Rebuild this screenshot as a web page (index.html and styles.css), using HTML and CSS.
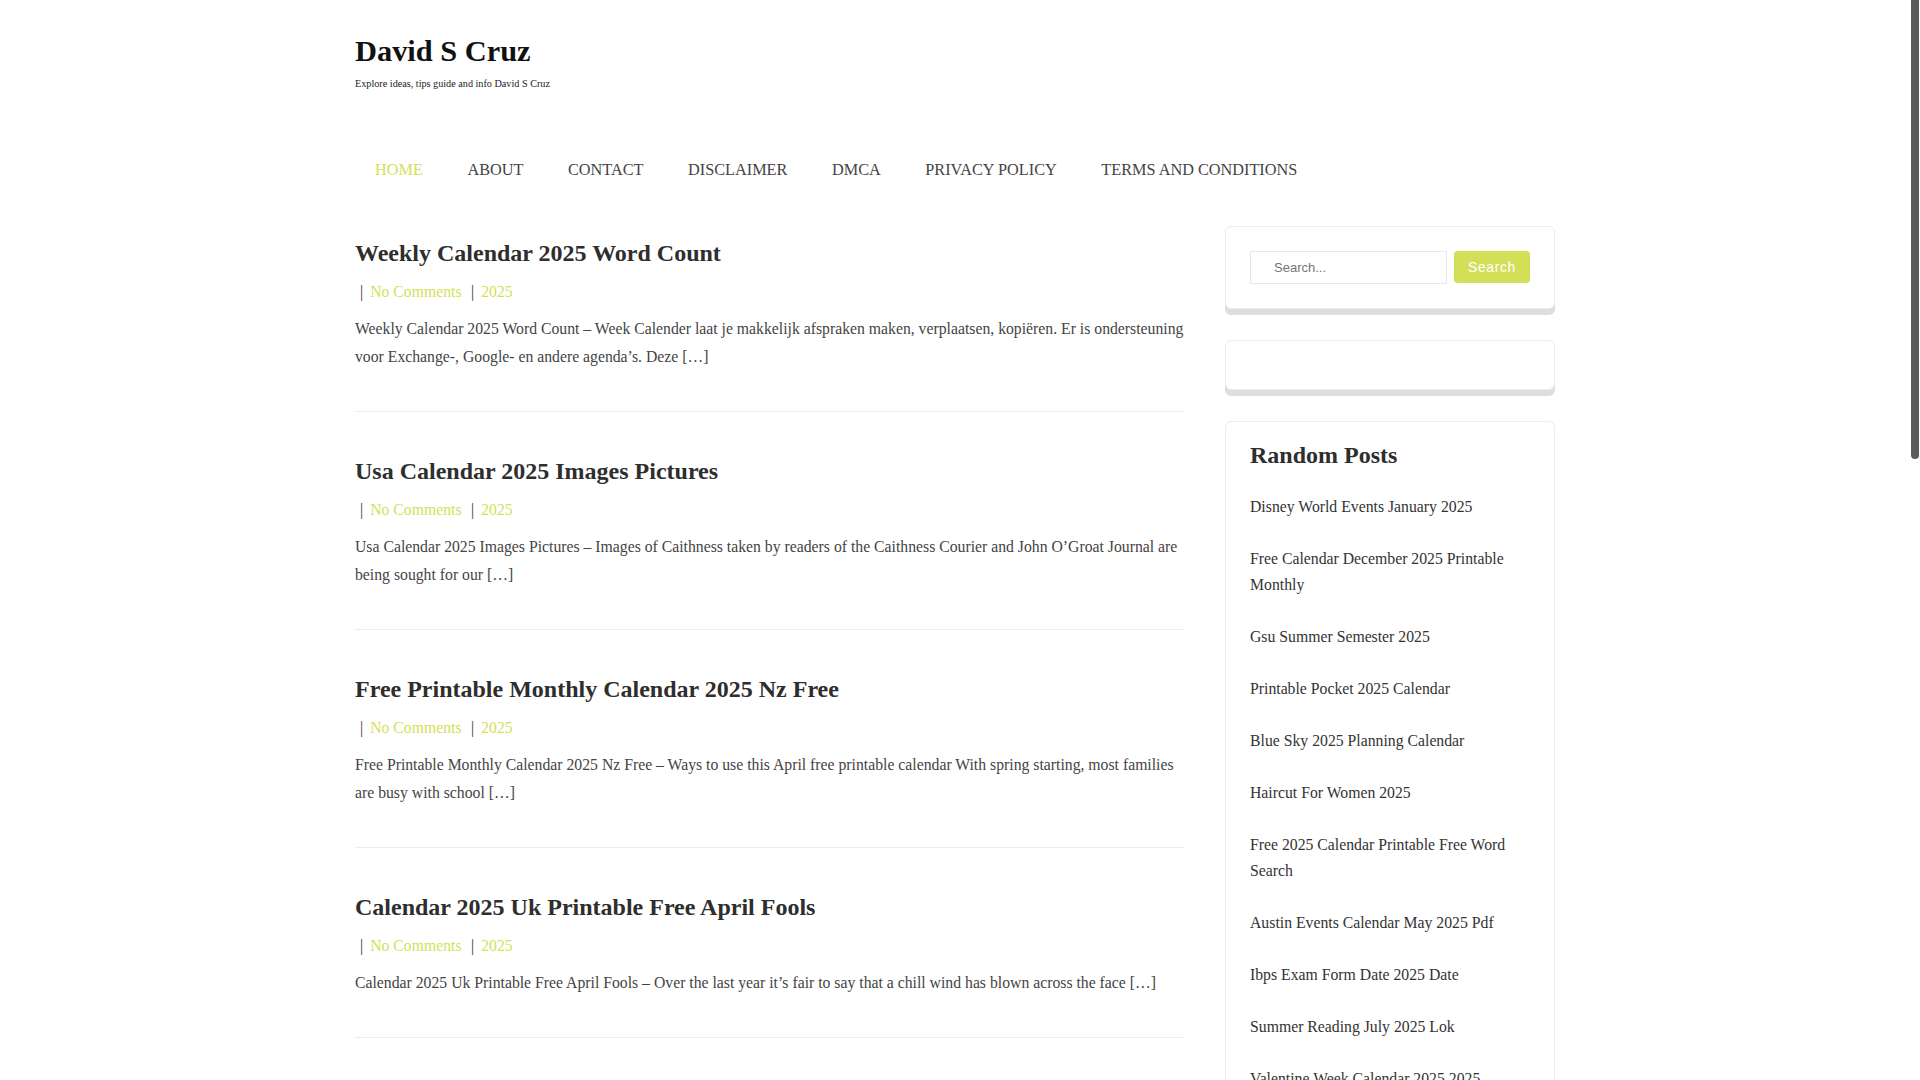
FILE: index.html
```html
<!DOCTYPE html>
<html lang="en">
<head>
<meta charset="utf-8">
<title>David S Cruz</title>
<link rel="stylesheet" href="styles.css">
</head>
<body>
<div class="container">
  <header class="site-header">
    <h1 class="site-title"><a href="#">David S Cruz</a></h1>
    <p class="site-desc">Explore ideas, tips guide and info David S Cruz</p>
  </header>
  <nav class="main-nav">
    <ul>
      <li><a class="active" href="#">HOME</a></li>
      <li><a href="#">ABOUT</a></li>
      <li><a href="#">CONTACT</a></li>
      <li><a href="#">DISCLAIMER</a></li>
      <li><a href="#">DMCA</a></li>
      <li><a href="#">PRIVACY POLICY</a></li>
      <li><a href="#">TERMS AND CONDITIONS</a></li>
    </ul>
  </nav>
  <div class="site-content">
    <main class="posts">
      <article class="post">
        <h2 class="post-title"><a href="#">Weekly Calendar 2025 Word Count</a></h2>
        <div class="meta"><span class="sep first">|</span><a href="#">No Comments</a><span class="sep">|</span><a href="#">2025</a></div>
        <p class="excerpt">Weekly Calendar 2025 Word Count – Week Calender laat je makkelijk afspraken maken, verplaatsen, kopiëren. Er is ondersteuning voor Exchange-, Google- en andere agenda’s. Deze […]</p>
      </article>
      <article class="post">
        <h2 class="post-title"><a href="#">Usa Calendar 2025 Images Pictures</a></h2>
        <div class="meta"><span class="sep first">|</span><a href="#">No Comments</a><span class="sep">|</span><a href="#">2025</a></div>
        <p class="excerpt">Usa Calendar 2025 Images Pictures – Images of Caithness taken by readers of the Caithness Courier and John O’Groat Journal are being sought for our […]</p>
      </article>
      <article class="post">
        <h2 class="post-title"><a href="#">Free Printable Monthly Calendar 2025 Nz Free</a></h2>
        <div class="meta"><span class="sep first">|</span><a href="#">No Comments</a><span class="sep">|</span><a href="#">2025</a></div>
        <p class="excerpt">Free Printable Monthly Calendar 2025 Nz Free – Ways to use this April free printable calendar With spring starting, most families are busy with school […]</p>
      </article>
      <article class="post">
        <h2 class="post-title"><a href="#">Calendar 2025 Uk Printable Free April Fools</a></h2>
        <div class="meta"><span class="sep first">|</span><a href="#">No Comments</a><span class="sep">|</span><a href="#">2025</a></div>
        <p class="excerpt">Calendar 2025 Uk Printable Free April Fools – Over the last year it’s fair to say that a chill wind has blown across the face […]</p>
      </article>
      <article class="post">
        <h2 class="post-title"><a href="#">Printable Calendar 2025 With Holidays Ireland</a></h2>
        <div class="meta"><span class="sep first">|</span><a href="#">No Comments</a><span class="sep">|</span><a href="#">2025</a></div>
        <p class="excerpt">Printable Calendar 2025 With Holidays Ireland – A printable calendar is a handy way to keep track of bank holidays, school breaks and family events throughout the year, and it can be […]</p>
      </article>
      <article class="post">
        <h2 class="post-title"><a href="#">Academic Calendar 2025 Ucla Spring Quarter</a></h2>
        <div class="meta"><span class="sep first">|</span><a href="#">No Comments</a><span class="sep">|</span><a href="#">2025</a></div>
        <p class="excerpt">Academic Calendar 2025 Ucla Spring Quarter – The academic calendar lists the important dates for instruction, final examinations, holidays and the start of the next […]</p>
      </article>
      <article class="post">
        <h2 class="post-title"><a href="#">Monthly Planner 2025 Printable Pdf</a></h2>
        <div class="meta"><span class="sep first">|</span><a href="#">No Comments</a><span class="sep">|</span><a href="#">2025</a></div>
        <p class="excerpt">Monthly Planner 2025 Printable Pdf – Planning your month ahead is one of the simplest ways to stay organised, and a printable planner makes it easy to write down […]</p>
      </article>
      <article class="post">
        <h2 class="post-title"><a href="#">Lunar Calendar 2025 March Full Moon</a></h2>
        <div class="meta"><span class="sep first">|</span><a href="#">No Comments</a><span class="sep">|</span><a href="#">2025</a></div>
        <p class="excerpt">Lunar Calendar 2025 March Full Moon – The moon phases change every few days, and a lunar calendar shows exactly when the new moon, first quarter and full moon will […]</p>
      </article>
      <article class="post">
        <h2 class="post-title"><a href="#">Yearly Calendar 2025 One Page Landscape</a></h2>
        <div class="meta"><span class="sep first">|</span><a href="#">No Comments</a><span class="sep">|</span><a href="#">2025</a></div>
        <p class="excerpt">Yearly Calendar 2025 One Page Landscape – A one page yearly calendar gives you an overview of all twelve months at a glance, perfect for your desk or […]</p>
      </article>
      <article class="post">
        <h2 class="post-title"><a href="#">School Holidays 2025 Calendar Nsw</a></h2>
        <div class="meta"><span class="sep first">|</span><a href="#">No Comments</a><span class="sep">|</span><a href="#">2025</a></div>
        <p class="excerpt">School Holidays 2025 Calendar Nsw – Families planning trips for the coming year will want to check the school term dates and public holidays before […]</p>
      </article>
      <div class="pagination"><span class="current">1</span><a href="#">2</a><a href="#">3</a><a href="#">Next »</a></div>
    </main>
    <aside class="sidebar">
      <section class="widget">
        <form class="search-form" onsubmit="return false">
          <input class="search-field" type="search" placeholder="Search...">
          <button class="search-btn" type="submit">Search</button>
        </form>
      </section>
      <section class="widget"></section>
      <section class="widget widget-posts">
        <h3 class="widget-title">Random Posts</h3>
        <ul>
          <li><a href="#">Disney World Events January 2025</a></li>
          <li><a href="#">Free Calendar December 2025 Printable Monthly</a></li>
          <li><a href="#">Gsu Summer Semester 2025</a></li>
          <li><a href="#">Printable Pocket 2025 Calendar</a></li>
          <li><a href="#">Blue Sky 2025 Planning Calendar</a></li>
          <li><a href="#">Haircut For Women 2025</a></li>
          <li><a href="#">Free 2025 Calendar Printable Free Word Search</a></li>
          <li><a href="#">Austin Events Calendar May 2025 Pdf</a></li>
          <li><a href="#">Ibps Exam Form Date 2025 Date</a></li>
          <li><a href="#">Summer Reading July 2025 Lok</a></li>
          <li><a href="#">Valentine Week Calendar 2025 2025</a></li>
          <li><a href="#">Easter Sunday 2025 Date Calendar</a></li>
        </ul>
      </section>
    </aside>
  </div>
  <footer class="site-footer">Copyright © 2025 David S Cruz</footer>
</div>
<div class="scroll-track" aria-hidden="true"><div class="scroll-thumb"></div></div>
</body>
</html>
```

FILE: styles.css
```css
html, body {
  margin: 0;
  padding: 0;
  background: #fff;
}
body {
  padding-right: 10px;
  font-family: "Liberation Serif", "Times New Roman", serif;
  font-size: 16px;
  color: #444;
}
a {
  text-decoration: none;
  color: inherit;
}
.scroll-track {
  position: fixed;
  top: 0;
  right: 0;
  width: 10px;
  height: 100vh;
  background: #fff;
}
.scroll-thumb {
  width: 8px;
  height: 459px;
  margin-left: 1px;
  border-radius: 0 0 4px 4px;
  background: #5c5c5c;
}
.container {
  width: 1200px;
  margin: 0 auto;
}
.site-header {
  padding-top: 33px;
}
.site-title {
  margin: 0;
  font-size: 30.4px;
  line-height: 36px;
  font-weight: bold;
  color: #111;
}
.site-desc {
  margin: 8px 0 0;
  font-size: 10.2px;
  line-height: 14px;
  color: #222;
}
.main-nav {
  margin-top: 54px;
}
.main-nav ul {
  display: flex;
  gap: 4.6px;
  list-style: none;
  margin: 0;
  padding: 0;
}
.main-nav a {
  display: block;
  padding: 0 20px;
  line-height: 50px;
  font-size: 16.25px;
  color: #444;
}
.main-nav a.active {
  color: #d3df57;
}
.site-content {
  display: flex;
  gap: 40px;
  align-items: flex-start;
}
.posts {
  width: 830px;
}
.post {
  padding: 44px 0 40px;
  border-bottom: 1px solid #ebebf0;
}
.post:first-child {
  padding-top: 43px;
}
.post-title {
  margin: 0;
  font-size: 24px;
  line-height: 30px;
  font-weight: bold;
  color: #2e2e2e;
}
.meta {
  margin-top: 10px;
  line-height: 28px;
  font-size: 15.75px;
  color: #333;
}
.meta a {
  color: #d3df57;
}
.meta .sep {
  margin: 0 7px 0 9.4px;
}
.meta .sep.first {
  margin-left: 5px;
}
.excerpt {
  margin: 9px 0 0;
  line-height: 28px;
  font-size: 15.74px;
  color: #444;
}
.pagination {
  display: flex;
  gap: 10px;
  padding: 40px 0;
  font-size: 16px;
}
.pagination a,
.pagination span {
  padding: 6px 12px;
  border: 1px solid #ebebf0;
  border-radius: 4px;
  color: #444;
}
.pagination .current {
  background: #d3df57;
  border-color: #d3df57;
  color: #fff;
}
.sidebar {
  width: 330px;
  padding-top: 31px;
}
.widget {
  background: #fff;
  border: 1px solid #ebebf0;
  border-radius: 6px;
  padding: 24px;
  margin-bottom: 31px;
  box-shadow: 0 6px 0 #dedede;
}
.search-form {
  display: flex;
  gap: 7px;
  align-items: flex-start;
  margin: 0;
}
.search-field {
  flex: 1;
  min-width: 0;
  height: 33px;
  box-sizing: border-box;
  border: 1px solid #e6e6eb;
  border-radius: 0;
  padding: 0 0 0 23px;
  font-family: "Liberation Sans", Arial, sans-serif;
  font-size: 13px;
  color: #555;
  outline: none;
}
.search-field::placeholder {
  color: #757575;
}
.search-btn {
  width: 76px;
  height: 32px;
  border: none;
  border-radius: 4px;
  background: #d3df57;
  color: #fff;
  font-family: "Liberation Sans", Arial, sans-serif;
  font-size: 14px;
  letter-spacing: 0.6px;
  padding: 0;
  cursor: pointer;
}
.widget-posts {
  padding: 17.5px 24px 24px;
}
.widget-title {
  margin: 0;
  font-size: 24px;
  line-height: 30px;
  font-weight: bold;
  color: #2e2e2e;
}
.widget-posts ul {
  list-style: none;
  margin: 11px 0 0;
  padding: 0;
}
.widget-posts li {
  padding: 13px 0;
  line-height: 26px;
  font-size: 15.75px;
}
.widget-posts a {
  color: #333;
}
.site-footer {
  padding: 30px 0 40px;
  text-align: center;
  font-size: 14px;
  color: #666;
}
```
